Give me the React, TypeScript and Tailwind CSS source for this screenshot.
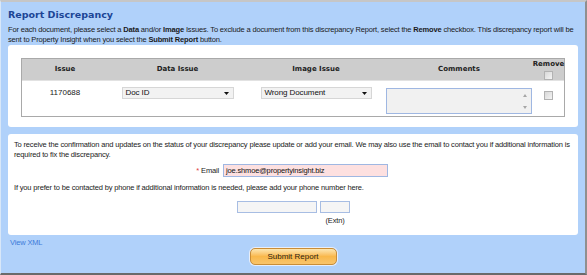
const body = "font-['Liberation_Sans',Tahoma,Arial,sans-serif]";
const heading = "font-['DejaVu_Sans',Verdana,sans-serif] font-bold tracking-normal";

function SelectBox({ value, width }: { value: string; width: string }) {
  return (
    <div
      className={`${width} h-[12px] flex items-center justify-between border border-[#d6d6d6] bg-[#f2f2f2] pl-[3px] pr-[3px] text-[8px] leading-[10px] tracking-[-0.1px] text-[#111]`}
    >
      <span>{value}</span>
      <svg width="5" height="3" viewBox="0 0 5 3" className="mr-[1px]">
        <path d="M0 0h5L2.5 3z" fill="#111" />
      </svg>
    </div>
  );
}

function CheckBox() {
  return <div className="w-[9px] h-[9px] border border-[#b2b2b2] bg-gradient-to-br from-[#d8d8d8] to-[#f4f4f4]" />;
}

export default function App() {
  return (
    <div
      className={`${body} w-[587px] h-[275px] box-border flex flex-col bg-[#b0d1fa] border-t-2 border-t-[#c6c6c6] border-r-2 border-r-[#8f8f8f] border-b-2 border-b-[#6a6a6a] border-l border-l-[#d8e7f8] text-[7.5px] tracking-[-0.16px] text-[#1a1a1a]`}
    >
      <h1 className={`${heading} ml-[7px] mt-[6px] text-[9.5px] leading-[14px] text-[#1c4596]`}>
        Report Discrepancy
      </h1>
      <p className="ml-[7px] mr-[3px] mt-[3px] leading-[10px]">
        For each document, please select a <b>Data</b> and/or <b>Image</b> Issues. To exclude a document from
        this discrepancy Report, select the <b>Remove</b> checkbox. This discrepancy report will be sent to
        Property Insight when you select the <b>Submit Report</b> button.
      </p>

      {/* issues table */}
      <div className="mx-[7px] h-[82px] rounded-[3px] bg-white pt-[13px] pl-[13px]">
        <div className="w-[544px] border border-[#a9a9a9]">
          <div
            className={`${heading} grid grid-cols-[86px_139px_138px_148px_31px] h-[21px] bg-[#cdcdcd] text-[7px] text-[#222]`}
          >
            <div className="flex items-center justify-center">Issue</div>
            <div className="flex items-center justify-center">Data Issue</div>
            <div className="flex items-center justify-center">Image Issue</div>
            <div className="flex items-center justify-center">Comments</div>
            <div className="flex flex-col items-center pt-[1px] leading-[9px]">
              <span>Remove</span>
              <div className="mt-[2px]">
                <CheckBox />
              </div>
            </div>
          </div>
          <div className="grid grid-cols-[86px_139px_138px_148px_31px] h-[36px] border-t border-[#e2e2e2]">
            <div className="flex justify-center pt-[7px] text-[8px] leading-[10px] tracking-normal">1170688</div>
            <div className="flex justify-center pt-[6px]">
              <SelectBox value="Doc ID" width="w-[112px]" />
            </div>
            <div className="flex justify-center pt-[6px]">
              <SelectBox value="Wrong Document" width="w-[111px]" />
            </div>
            <div className="flex justify-center pt-[7px]">
              <div className="relative w-[146px] h-[26px] border border-[#9fb7e2] bg-[#f1f1f1]">
                <svg width="4" height="3" viewBox="0 0 4 3" className="absolute right-[4px] top-[5px]">
                  <path d="M0 3h4L2 0z" fill="#a6a6a6" />
                </svg>
                <svg width="4" height="3" viewBox="0 0 4 3" className="absolute right-[4px] bottom-[4px]">
                  <path d="M0 0h4L2 3z" fill="#a6a6a6" />
                </svg>
              </div>
            </div>
            <div className="flex justify-center pt-[10px]">
              <CheckBox />
            </div>
          </div>
        </div>
      </div>

      {/* contact panel */}
      <div className="mx-[7px] mt-[7px] h-[101px] rounded-[3px] bg-white pt-[6px] pl-[6px] pr-[3px] leading-[10px]">
        <p>
          To receive the confirmation and updates on the status of your discrepancy please update or add your email.
          We may also use the email to contact you if additional information is required to fix the discrepancy.
        </p>
        <div className="mt-[4px] flex items-center">
          <div className="w-[207px] pr-[2px] text-right">
            <span className="text-[#e0403c]">*</span> Email
          </div>
          <div className="ml-[2px] w-[165px] h-[13px] flex items-center border border-[#9fb7e2] bg-[#fde0e0] pl-[2px] text-[#111]">
            joe.shmoe@propertyinsight.biz
          </div>
        </div>
        <p className="mt-[6px]">
          If you prefer to be contacted by phone if additional information is needed, please add your phone number
          here.
        </p>
        <div className="mt-[8px] ml-[223px] flex gap-[3px]">
          <div className="w-[80px] h-[12px] border border-[#a7bde3] bg-[#f5f5f5]" />
          <div className="flex flex-col items-center">
            <div className="w-[30px] h-[12px] border border-[#a7bde3] bg-[#f5f5f5]" />
            <span className="mt-[3px] text-[#222]">(Extn)</span>
          </div>
        </div>
      </div>

      <a className="ml-[9px] mt-[3px] leading-[10px] text-[#3c7bd9] cursor-pointer">View XML</a>
      <div className="flex justify-center">
        <button className="w-[87px] h-[17px] rounded-[5px] border border-[#c98d36] bg-gradient-to-b from-[#fde7b0] via-[#f9b84a] to-[#f8c46a] text-[8px] tracking-normal text-[#2c2210] shadow-[0_0_0_1px_#e8eef8]">
          Submit Report
        </button>
      </div>
    </div>
  );
}
